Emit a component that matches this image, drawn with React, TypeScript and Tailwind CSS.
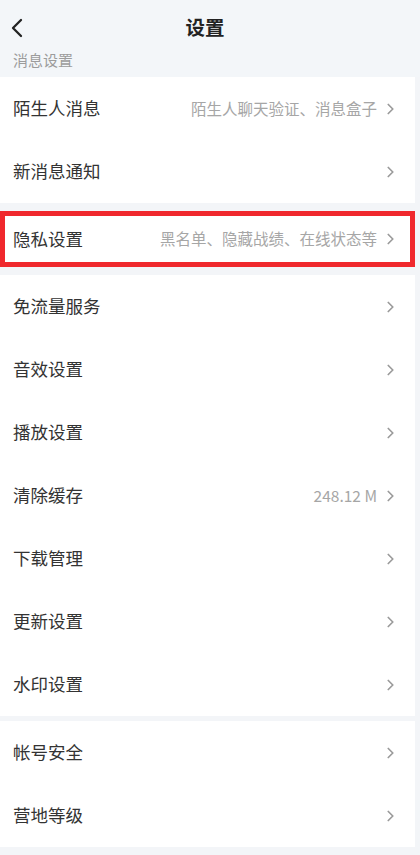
const font = { fontFamily: '"Noto Sans CJK SC", "Noto Sans", sans-serif' };

type Row = { label: string; value?: string };

const Chevron = () => (
  <svg width="7" height="12" viewBox="0 0 7 12" fill="none" className="shrink-0">
    <path d="M1.3 1.5 L5.8 6 L1.3 10.5" stroke="#9a9a9a" strokeWidth="1.7" strokeLinecap="round" strokeLinejoin="round" />
  </svg>
);

const SettingRow = ({ label, value, h = 'h-[63px]' }: Row & { h?: string }) => (
  <div className={`flex items-center justify-between pl-[13px] pr-[21px] bg-white ${h}`}>
    <span className="text-[17.5px] text-[#333333]">{label}</span>
    <div className="flex items-center gap-[10px]">
      {value && <span className="text-[15.5px] text-[#a6a6a6]">{value}</span>}
      <Chevron />
    </div>
  </div>
);

const section2: Row[] = [
  { label: '免流量服务' },
  { label: '音效设置' },
  { label: '播放设置' },
  { label: '清除缓存', value: '248.12 M' },
  { label: '下载管理' },
  { label: '更新设置' },
  { label: '水印设置' },
];

const section3: Row[] = [{ label: '帐号安全' }, { label: '营地等级' }];

export default function App() {
  return (
    <div className="w-[420px] h-[855px] overflow-hidden bg-[#f3f5f8]" style={font}>
      {/* header */}
      <div className="h-[77px] bg-[#f3f6f9]">
        <div className="relative h-[54px] flex items-center justify-center pr-[10px]">
          <svg width="14" height="20" viewBox="0 0 14 20" fill="none" className="absolute left-[10px] top-[18px]">
            <path d="M11 2 L3 10 L11 18" stroke="#222222" strokeWidth="2.3" strokeLinecap="round" strokeLinejoin="round" />
          </svg>
          <span className="text-[19.5px] font-bold text-[#222222]">设置</span>
        </div>
        <div className="pl-[13px] text-[15px] text-[#9c9c9c] leading-[12px]">消息设置</div>
      </div>

      <div className="w-[415px]">
        <SettingRow label="陌生人消息" value="陌生人聊天验证、消息盒子" />
        <SettingRow label="新消息通知" />
      </div>

      <div className="h-[8px]" />

      <div className="relative w-[415px]">
        <SettingRow label="隐私设置" value="黑名单、隐藏战绩、在线状态等" h="h-[56px]" />
        <div className="absolute inset-0 border-[5px] border-[#f0282d] pointer-events-none" />
      </div>

      <div className="h-[8px]" />

      <div className="w-[415px]">
        {section2.map((r) => (
          <SettingRow key={r.label} {...r} />
        ))}
      </div>

      <div className="h-[5px]" />

      <div className="w-[415px]">
        {section3.map((r) => (
          <SettingRow key={r.label} {...r} />
        ))}
      </div>
    </div>
  );
}
